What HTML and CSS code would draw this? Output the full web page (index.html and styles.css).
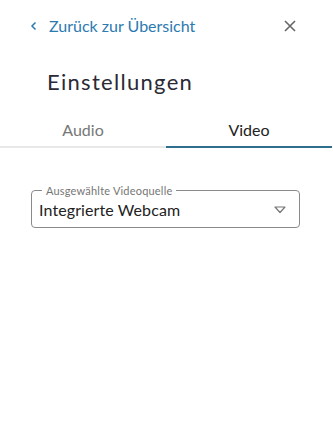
FILE: index.html
```html
<!DOCTYPE html>
<html lang="de">
<head>
    <meta charset="UTF-8">
    <meta name="viewport" content="width=device-width, initial-scale=1.0">
    <title>Einstellungen</title>
    <link rel="stylesheet" href="styles.css">
</head>
<body>
    <div class="panel">
        <div class="top-bar">
            <a href="#" class="back-link">
                <svg class="back-icon" width="8" height="10" viewBox="0 0 8 10"><path d="M5.5 1.5 L2 5 L5.5 8.5" fill="none" stroke="currentColor" stroke-width="1.5"/></svg>
                <span>Zurück zur Übersicht</span>
            </a>
            <button class="close-button" aria-label="Schließen">
                <svg width="12" height="12" viewBox="0 0 12 12"><path d="M1 1 L11 11 M11 1 L1 11" fill="none" stroke="currentColor" stroke-width="1.6"/></svg>
            </button>
        </div>

        <h1 class="title">Einstellungen</h1>

        <div class="tabs">
            <div class="tab">Audio</div>
            <div class="tab active">Video</div>
        </div>

        <div class="content">
            <fieldset class="select-field">
                <legend>Ausgewählte Videoquelle</legend>
                <div class="select-value">
                    <span>Integrierte Webcam</span>
                    <svg class="select-arrow" width="12" height="8" viewBox="0 0 12 8"><path d="M1 1 L11 1 L6 6.5 Z" fill="none" stroke="currentColor" stroke-width="1.2" stroke-linejoin="round"/></svg>
                </div>
            </fieldset>
        </div>
    </div>
</body>
</html>
```

FILE: styles.css
```css
* {
    margin: 0;
    padding: 0;
    box-sizing: border-box;
    font-family: Lato, "Open Sans", sans-serif;
}

body {
    background: white;
    width: 333px;
}

.panel {
    width: 332px;
}

.top-bar {
    display: flex;
    justify-content: space-between;
    align-items: center;
    padding: 15px 36px 0 30px;
    height: 36px;
}

.back-link {
    display: flex;
    align-items: center;
    gap: 11px;
    color: #2b7ab0;
    text-decoration: none;
    font-size: 16px;
}

.close-button {
    background: none;
    border: none;
    color: #666;
    display: flex;
    cursor: pointer;
}

.title {
    font-weight: 400;
    font-size: 22px;
    letter-spacing: 1.3px;
    color: #2a2a36;
    padding: 33px 0 0 47px;
    line-height: 26px;
}

.tabs {
    display: flex;
    margin-top: 25px;
    border-bottom: 2px solid #e8e8e8;
}

.tab {
    flex: 1;
    text-align: center;
    font-size: 16px;
    color: #777;
    padding-bottom: 7px;
    margin-bottom: -2px;
    border-bottom: 2px solid transparent;
}

.tab.active {
    color: #222;
    border-bottom-color: #2e6f8e;
}

.content {
    padding: 36px 32px 0 31px;
}

.select-field {
    border: 1px solid #8a8a8a;
    border-radius: 4px;
    padding: 0 13px 6px 7px;
}

.select-field legend {
    font-size: 11px;
    color: #757575;
    padding: 0 4px;
    margin-left: 3px;
    letter-spacing: 0.2px;
}

.select-value {
    display: flex;
    justify-content: space-between;
    align-items: center;
    padding-top: 2px;
    font-size: 16px;
    letter-spacing: 0.1px;
    line-height: 22px;
    color: #222;
}

.select-arrow {
    color: #777;
}
```
